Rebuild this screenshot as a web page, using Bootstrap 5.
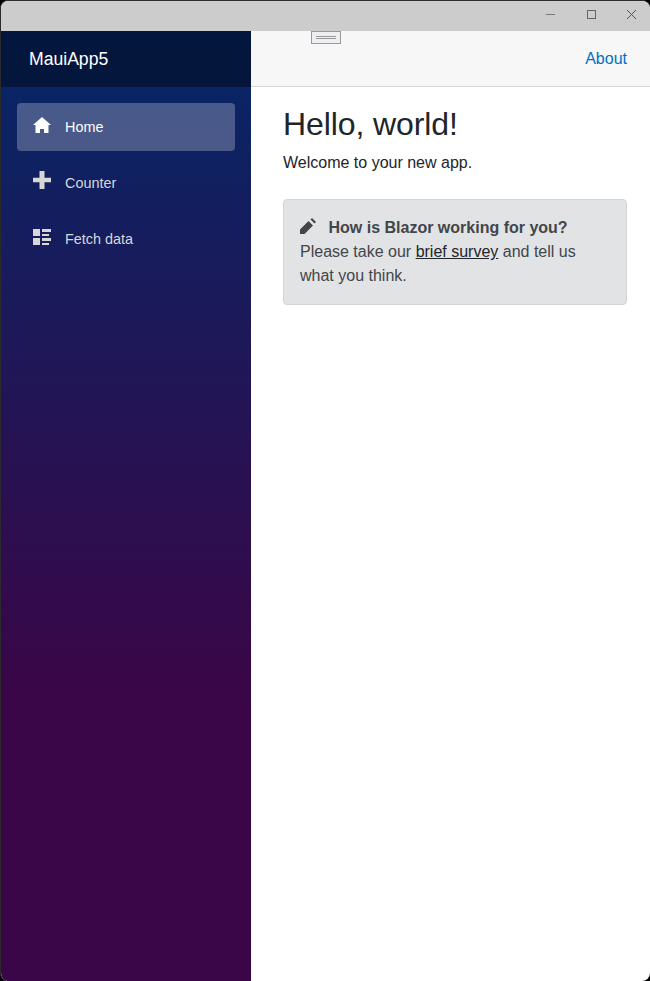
<!DOCTYPE html>
<html lang="en">
<head>
<meta charset="utf-8">
<meta name="viewport" content="width=device-width, initial-scale=1">
<title>MauiApp5</title>
<link href="https://cdn.jsdelivr.net/npm/bootstrap@5.3.0/dist/css/bootstrap.min.css" rel="stylesheet">
<style>
html, body { height: 100%; }
body { background: #000; font-family: "Liberation Sans", Arial, sans-serif; color: #212529; overflow: hidden; }
.app-window { height: 981px; border: solid #2b2b2b; border-width: 1px 0 0 1px; border-radius: 8px; background: #fff; }
.title-bar { height: 30px; background: #ccc; padding-right: 12px; gap: 26px; }
.title-bar svg { width: 14px; height: 14px; display: block; margin-top: -4px; }
.side-panel { width: 250px; background: linear-gradient(180deg, #052767 0%, #3a0647 70%); }
.side-head { height: 56px; background: rgba(0,0,0,.4); padding-left: 28px; color: #fff; font-size: 17.6px; }
.side-nav { padding: 16px; gap: 8px; font-size: 14.4px; }
.side-nav .nav-link { height: 48px; padding: 2px 16px 0; border-radius: 4px; color: #d7d7d7; }
.side-nav .nav-link.active { background: rgba(255,255,255,.25); color: #fff; }
.side-nav svg { width: 18px; height: 18px; margin: -6px 14px 0 0; }
.side-nav .plus-icon { margin-top: -8px; }
.top-row { height: 56px; background: #f7f7f7; border-bottom: 1px solid #d6d5d5; padding-right: 23px; }
.top-row a { color: #0071c1; }
.drag-handle { top: 0; left: 60px; width: 30px; height: 13px; border: 1px solid #999; background: #eeeef2; }
.page-body { padding: 18px 23px 0 32px; }
.page-body h1 { font-size: 32px; line-height: 38.4px; margin-bottom: 8px; letter-spacing: -.1px; }
.survey { padding: 16px; margin-top: 24px; border-radius: 4px; background: #e2e3e5; border-color: #d3d6d8; color: #41464b; }
.survey svg { width: 16px; height: 16px; margin-right: 12.5px; vertical-align: -1px; }
.survey a { color: #212529; }
</style>
<script src="https://cdn.jsdelivr.net/npm/bootstrap@5.3.0/dist/js/bootstrap.bundle.min.js" defer></script>
</head>
<body>
<div class="app-window d-flex flex-column overflow-hidden">
  <div class="title-bar d-flex align-items-center justify-content-end flex-shrink-0">
    <svg viewBox="0 0 14 14"><path d="M2 7.500h9" stroke="#777" fill="none"/></svg>
    <svg viewBox="0 0 14 14"><rect x="3.500" y="3.500" width="8" height="8" stroke="#666" fill="none"/></svg>
    <svg viewBox="0 0 14 14"><path d="M3 3l9 9M12 3l-9 9" stroke="#555" fill="none"/></svg>
  </div>
  <div class="d-flex flex-grow-1">
    <aside class="side-panel flex-shrink-0">
      <div class="side-head d-flex align-items-center">MauiApp5</div>
      <nav class="side-nav nav flex-column">
        <a class="nav-link active d-flex align-items-center" href="#"><svg viewBox="0 0 18 18" fill="currentColor"><path d="M9 1L0 9h2.500v8H7v-4h4v4h4.500V9H18z"/></svg>Home</a>
        <a class="nav-link d-flex align-items-center" href="#"><svg class="plus-icon" viewBox="0 0 18 18" fill="currentColor"><path d="M6.500 0h5v6.700H18v4.600h-6.500V18h-5v-6.700H0V6.700h6.500z"/></svg>Counter</a>
        <a class="nav-link d-flex align-items-center" href="#"><svg viewBox="0 0 18 18" fill="currentColor"><path d="M0 1h7v7H0zM0 10h7v7H0zM9 1h9v3H9zM9 6h7v2H9zM9 10h9v3H9zM9 15h7v2H9z"/></svg>Fetch data</a>
      </nav>
    </aside>
    <main class="flex-grow-1 position-relative">
      <div class="drag-handle position-absolute"><svg width="28" height="11" class="d-block"><path d="M4 4.500h20M4 6.500h20" stroke="#999"/></svg></div>
      <div class="top-row d-flex align-items-center justify-content-end"><a class="text-decoration-none" href="#">About</a></div>
      <article class="page-body">
        <h1>Hello, world!</h1>
        <p class="mb-0">Welcome to your new app.</p>
        <div class="survey alert">
          <svg viewBox="0 0 16 16" fill="currentColor"><path d="M0 16v-4.500L8.500 3l4.500 4.500L4.500 16zM10.500 1.500L12 0l4 4-1.500 1.500z"/></svg><strong>How is Blazor working for you?</strong>
          <div>Please take our <a href="#">brief survey</a> and tell us what you think.</div>
        </div>
      </article>
    </main>
  </div>
</div>
</body>
</html>
